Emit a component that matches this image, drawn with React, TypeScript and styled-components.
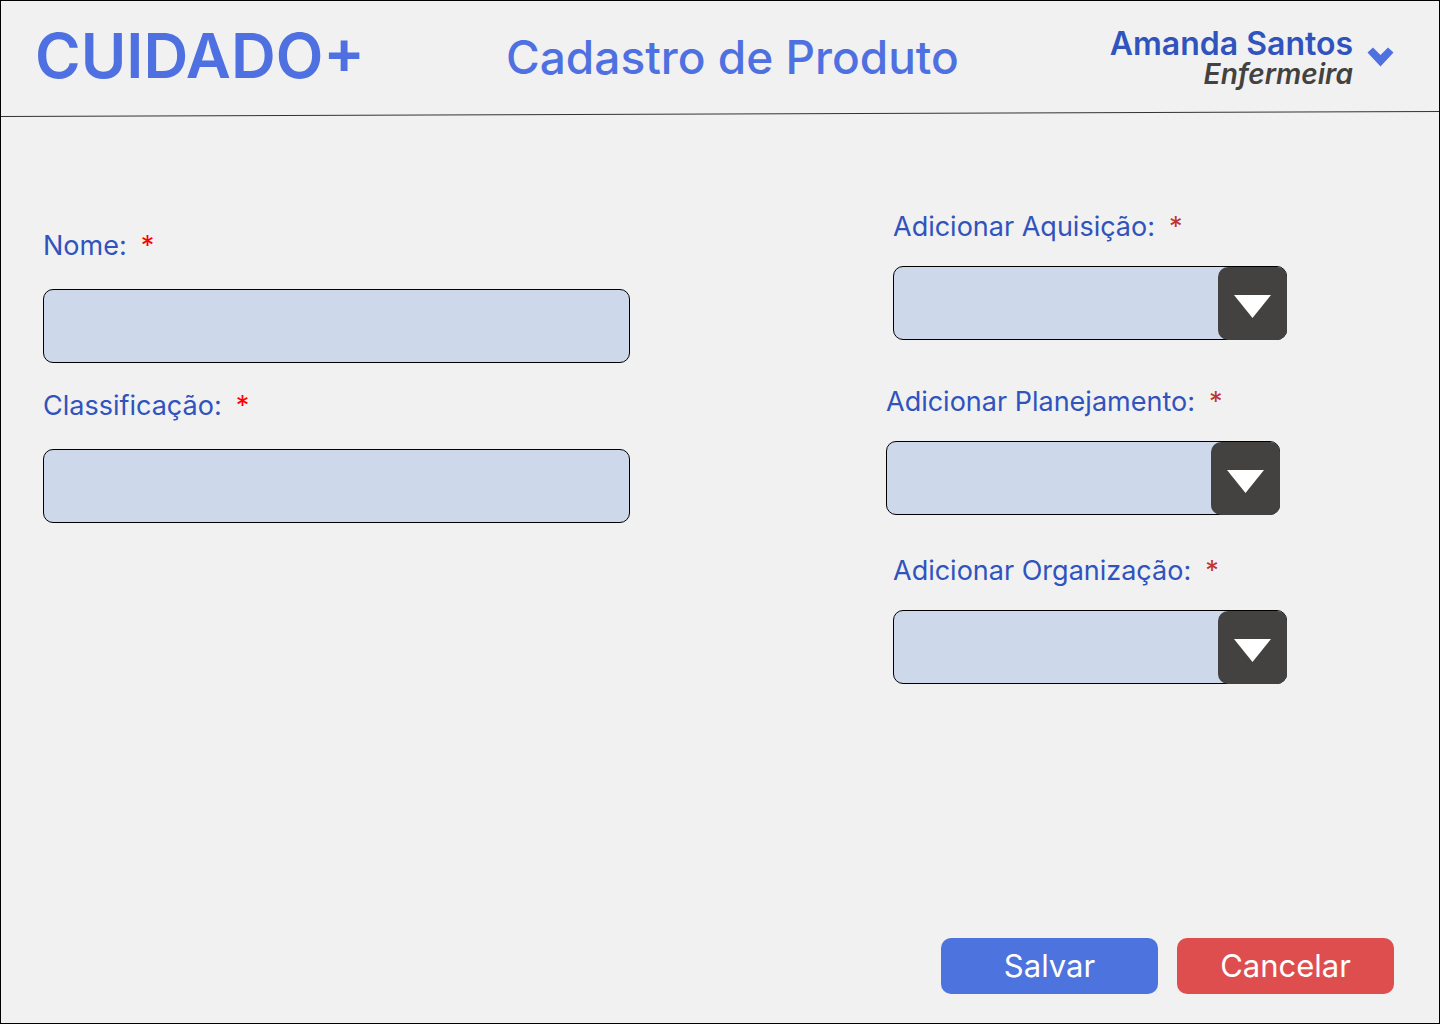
import React from "react";
import styled, { createGlobalStyle } from "styled-components";

const color = {
  page: "#f1f1f1",
  brand: "#4f70e0",
  ink: "#3053bd",
  field: "#cdd8ea",
  dark: "#434240",
  save: "#4d73df",
  cancel: "#df4e4e",
};

const GlobalStyle = createGlobalStyle`
  *, *::before, *::after { box-sizing: border-box; }
  body { margin: 0; background: ${color.page}; }
  body, button, input, select { font-family: Inter, "Liberation Sans", sans-serif; }
`;

const Page = styled.div`
  display: flex;
  flex-direction: column;
  min-height: 100vh;
  border: 1px solid #000;
  background: ${color.page};
`;

const Header = styled.header`
  display: flex;
  justify-content: space-between;
  align-items: center;
  height: 110px;
  padding: 2px 45px 0 34px;
`;

const Logo = styled.div`
  color: ${color.brand};
  font-size: 62px;
  font-weight: 600;
  line-height: 76px;
  padding-bottom: 2px;
`;

const Title = styled.h1`
  margin: 0;
  padding-right: 10px;
  color: ${color.brand};
  font-size: 46px;
  font-weight: 500;
  line-height: 60px;
`;

const UserButton = styled.button`
  display: flex;
  align-items: center;
  gap: 14px;
  padding: 0;
  border: 0;
  background: none;
  text-align: right;
  cursor: pointer;
`;

const UserText = styled.span`
  display: flex;
  flex-direction: column;
  padding-top: 4px;
`;

const UserName = styled.span`
  color: ${color.ink};
  font-size: 32px;
  font-weight: 600;
  line-height: 30px;
`;

const UserRole = styled.span`
  color: ${color.dark};
  font-size: 28px;
  font-style: italic;
  font-weight: 600;
  line-height: 30px;
`;

const HeaderLine = styled.svg`
  display: block;
  width: 100%;
  height: 6px;
`;

const Form = styled.form`
  display: flex;
  flex: 1;
  flex-direction: column;
  justify-content: space-between;
`;

const Columns = styled.div`
  display: grid;
  grid-template-columns: 587fr 401fr;
  column-gap: 256px;
  align-items: start;
  padding: 92px 152px 40px 42px;
`;

const TextColumn = styled.div`
  display: grid;
  grid-template-rows: 160px auto;
  align-items: start;
  padding-top: 19px;
`;

const SelectColumn = styled.div`
  display: grid;
  grid-template-rows: 175px 169px auto;
  align-items: start;
  justify-items: end;
`;

const Field = styled.div<{ $gap: number }>`
  display: flex;
  flex-direction: column;
  gap: ${(p) => p.$gap}px;
  width: 100%;
`;

const SelectField = styled(Field)<{ $start?: boolean }>`
  width: calc(100% - 7px);
  justify-self: ${(p) => (p.$start ? "start" : "end")};
`;

const Label = styled.label`
  display: flex;
  gap: 14px;
  color: ${color.ink};
  font-size: 27px;
  line-height: 36px;
`;

const Required = styled.span<{ $tone: string }>`
  color: ${(p) => p.$tone};
`;

const TextInput = styled.input`
  width: 100%;
  height: 74px;
  padding: 0 20px;
  border: 1px solid #000;
  border-radius: 10px;
  background: ${color.field};
  color: ${color.dark};
  font-size: 27px;
`;

const SelectBox = styled.div`
  display: grid;
  grid-template-columns: 1fr 69px;
`;

const Select = styled.select`
  grid-area: 1 / 1 / 2 / 3;
  width: 100%;
  height: 74px;
  padding: 0 80px 0 20px;
  border: 1px solid #000;
  border-radius: 10px;
  appearance: none;
  background: ${color.field};
  color: ${color.dark};
  font-size: 27px;
`;

const Arrow = styled.span`
  display: flex;
  grid-area: 1 / 2 / 2 / 3;
  align-items: center;
  justify-content: center;
  margin-top: 1px;
  padding-top: 6px;
  border-radius: 10px;
  background: ${color.dark};
  pointer-events: none;
`;

const Actions = styled.div`
  display: flex;
  justify-content: flex-end;
  gap: 19px;
  padding: 0 45px 29px;
`;

const ActionButton = styled.button<{ $tone: string }>`
  width: 217px;
  height: 56px;
  padding: 0 0 2px;
  border: 0;
  border-radius: 10px;
  background: ${(p) => p.$tone};
  color: #fff;
  font-size: 31px;
  cursor: pointer;
`;

const textFields = [
  { id: "nome", label: "Nome:" },
  { id: "classificacao", label: "Classificação:" },
];

const selectFields = [
  { id: "aquisicao", label: "Adicionar Aquisição:" },
  { id: "planejamento", label: "Adicionar Planejamento:", start: true },
  { id: "organizacao", label: "Adicionar Organização:" },
];

export default function App() {
  return (
    <Page>
      <GlobalStyle />
      <Header>
        <Logo>CUIDADO+</Logo>
        <Title>Cadastro de Produto</Title>
        <UserButton type="button">
          <UserText>
            <UserName>Amanda Santos</UserName>
            <UserRole>Enfermeira</UserRole>
          </UserText>
          <svg width="27" height="20" viewBox="0 0 27 20" aria-hidden="true">
            <path d="M6 .5 13.500 8 21 .5 26.500 5.500 13.500 19.500.5 5.500Z" fill={color.brand} />
          </svg>
        </UserButton>
      </Header>
      <HeaderLine viewBox="0 0 1438 6" preserveAspectRatio="none" aria-hidden="true">
        <path d="M0 5.500 1438 .5" stroke="#333" strokeWidth="1" fill="none" />
      </HeaderLine>
      <Form onSubmit={(e) => e.preventDefault()}>
        <Columns>
          <TextColumn>
            {textFields.map((f) => (
              <Field key={f.id} $gap={25}>
                <Label htmlFor={f.id}>
                  {f.label}
                  <Required $tone="#ff0000">*</Required>
                </Label>
                <TextInput id={f.id} type="text" />
              </Field>
            ))}
          </TextColumn>
          <SelectColumn>
            {selectFields.map((f) => (
              <SelectField key={f.id} $gap={21} $start={f.start}>
                <Label htmlFor={f.id}>
                  {f.label}
                  <Required $tone="#c03434">*</Required>
                </Label>
                <SelectBox>
                  <Select id={f.id} defaultValue="">
                    <option value="" />
                  </Select>
                  <Arrow>
                    <svg width="37" height="23" viewBox="0 0 37 23" aria-hidden="true">
                      <path d="M0 0H37L18.500 23Z" fill="#fff" />
                    </svg>
                  </Arrow>
                </SelectBox>
              </SelectField>
            ))}
          </SelectColumn>
        </Columns>
        <Actions>
          <ActionButton type="submit" $tone={color.save}>Salvar</ActionButton>
          <ActionButton type="button" $tone={color.cancel}>Cancelar</ActionButton>
        </Actions>
      </Form>
    </Page>
  );
}
